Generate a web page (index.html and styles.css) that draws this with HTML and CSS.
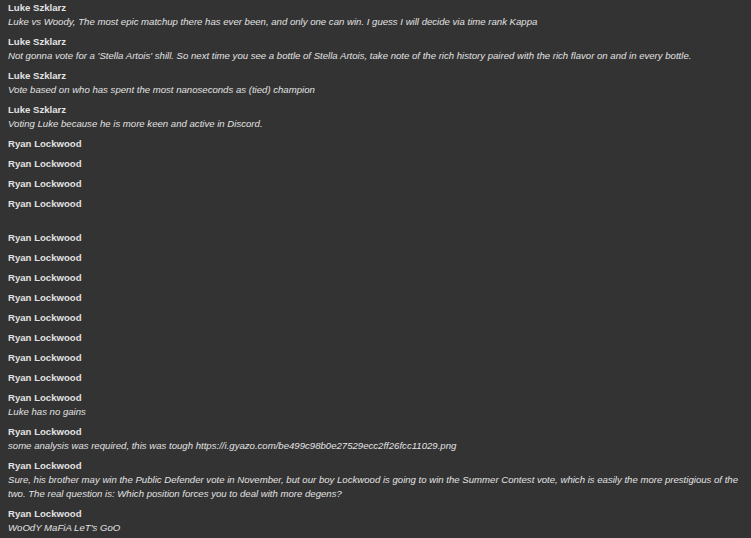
FILE: index.html
```html
<!DOCTYPE html>
<html>
<head>
<meta charset="utf-8">
<link rel="stylesheet" href="styles.css">
</head>
<body>
<div class="feed">
  <div class="msg"><div class="name">Luke Szklarz</div><div class="body">Luke vs Woody, The most epic matchup there has ever been, and only one can win. I guess I will decide via time rank Kappa</div></div>
  <div class="msg"><div class="name">Luke Szklarz</div><div class="body">Not gonna vote for a 'Stella Artois' shill. So next time you see a bottle of Stella Artois, take note of the rich history paired with the rich flavor on and in every bottle.</div></div>
  <div class="msg"><div class="name">Luke Szklarz</div><div class="body">Vote based on who has spent the most nanoseconds as (tied) champion</div></div>
  <div class="msg"><div class="name">Luke Szklarz</div><div class="body">Voting Luke because he is more keen and active in Discord.</div></div>
  <div class="msg"><div class="name">Ryan Lockwood</div></div>
  <div class="msg"><div class="name">Ryan Lockwood</div></div>
  <div class="msg"><div class="name">Ryan Lockwood</div></div>
  <div class="msg"><div class="name">Ryan Lockwood</div><div class="body empty"></div></div>
  <div class="msg"><div class="name">Ryan Lockwood</div></div>
  <div class="msg"><div class="name">Ryan Lockwood</div></div>
  <div class="msg"><div class="name">Ryan Lockwood</div></div>
  <div class="msg"><div class="name">Ryan Lockwood</div></div>
  <div class="msg"><div class="name">Ryan Lockwood</div></div>
  <div class="msg"><div class="name">Ryan Lockwood</div></div>
  <div class="msg"><div class="name">Ryan Lockwood</div></div>
  <div class="msg"><div class="name">Ryan Lockwood</div></div>
  <div class="msg"><div class="name">Ryan Lockwood</div><div class="body">Luke has no gains</div></div>
  <div class="msg"><div class="name">Ryan Lockwood</div><div class="body">some analysis was required, this was tough https://i.gyazo.com/be499c98b0e27529ecc2ff26fcc11029.png</div></div>
  <div class="msg"><div class="name">Ryan Lockwood</div><div class="body">Sure, his brother may win the Public Defender vote in November, but our boy Lockwood is going to win the Summer Contest vote, which is easily the more prestigious of the two. The real question is: Which position forces you to deal with more degens?</div></div>
  <div class="msg"><div class="name">Ryan Lockwood</div><div class="body">WoOdY MaFiA LeT's GoO</div></div>
</div>
</body>
</html>
```
FILE: styles.css
```css
html, body {
  margin: 0;
  padding: 0;
  background: #333333;
}
body {
  font-family: "Liberation Sans", Arial, sans-serif;
  font-size: 9.6px;
  color: #e2e2e2;
}
.feed {
  padding: 1px 12px 0 8px;
  display: flex;
  flex-direction: column;
  gap: 6px;
}
.name {
  font-weight: bold;
  line-height: 14px;
  height: 14px;
}
.body {
  font-style: italic;
  line-height: 14px;
}
.body.empty {
  height: 14px;
}
```
